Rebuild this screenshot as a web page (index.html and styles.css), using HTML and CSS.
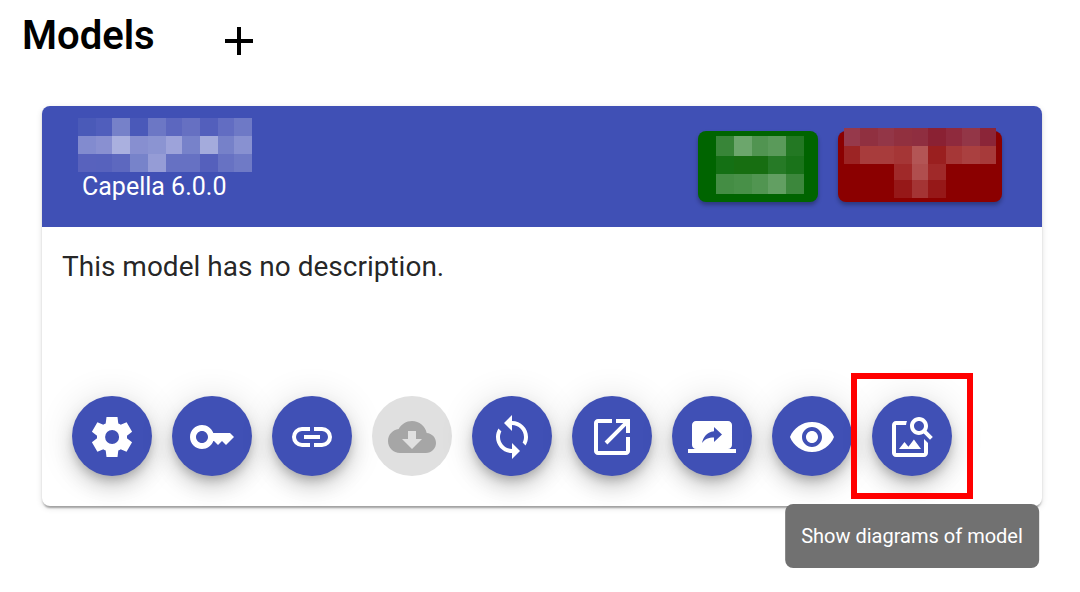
FILE: index.html
```html
<!DOCTYPE html>
<html lang="en">
<head>
<meta charset="utf-8">
<meta name="viewport" content="width=device-width, initial-scale=1">
<title>Models</title>
<link rel="stylesheet" href="styles.css">
</head>
<body>
<main class="page">
  <header class="page-header">
    <h1 class="page-title">Models</h1>
    <button class="add-button" type="button" aria-label="Add model"><svg class="icon" viewBox="0 0 24 24"><path d="M19 13h-6v6h-2v-6H5v-2h6V5h2v6h6v2z"/></svg></button>
  </header>

  <article class="card">
    <div class="card-header">
      <div class="card-heading">
        <svg class="mosaic" width="174" height="54" viewBox="0 0 174 54" aria-hidden="true">
          <path fill="#4a5ab8" d="M0 0h18v18H0z"/><path fill="#505ebc" d="M18 0h16v18H18z"/><path fill="#7681c9" d="M34 0h18v18H34z"/><path fill="#4a59b9" d="M52 0h18v18H52z"/><path fill="#6c77c5" d="M70 0h18v18H70z"/><path fill="#5c67bf" d="M88 0h16v18H88z"/><path fill="#6670c2" d="M104 0h18v18h-18z"/><path fill="#535fbc" d="M122 0h18v18h-18z"/><path fill="#626dc2" d="M140 0h16v18h-16z"/><path fill="#6e79c6" d="M156 0h18v18h-18z"/>
          <path fill="#828bcf" d="M0 18h18v18H0z"/><path fill="#8990d1" d="M18 18h16v18H18z"/><path fill="#aab0df" d="M34 18h18v18H34z"/><path fill="#878fd0" d="M52 18h18v18H52z"/><path fill="#8b94d2" d="M70 18h18v18H70z"/><path fill="#9da3da" d="M88 18h16v18H88z"/><path fill="#7782ca" d="M104 18h18v18h-18z"/><path fill="#a4abdc" d="M122 18h18v18h-18z"/><path fill="#7681c9" d="M140 18h16v18h-16z"/><path fill="#8891d1" d="M156 18h18v18h-18z"/>
          <path fill="#5862bd" d="M0 36h18v18H0z"/><path fill="#5762bd" d="M18 36h16v18H18z"/><path fill="#5d68bf" d="M34 36h18v18H34z"/><path fill="#7783ca" d="M52 36h18v18H52z"/><path fill="#959cd6" d="M70 36h18v18H70z"/><path fill="#6671c3" d="M88 36h34v18H88z"/><path fill="#5560bc" d="M122 36h18v18h-18z"/><path fill="#6772c3" d="M140 36h16v18h-16z"/><path fill="#6f7ac6" d="M156 36h18v18h-18z"/>
        </svg>
        <p class="card-subtitle">Capella 6.0.0</p>
      </div>
      <div class="badges">
        <div class="badge badge-green">
          <svg class="mosaic" width="88" height="58" viewBox="0 0 88 58" aria-hidden="true">
            <path fill="#388538" d="M0 0h18v20H0z"/><path fill="#6ca66c" d="M18 0h18v20H18z"/><path fill="#519451" d="M36 0h16v20H36z"/><path fill="#5a9a5a" d="M52 0h18v20H52z"/><path fill="#237823" d="M70 0h18v20H70z"/>
            <path fill="#147014" d="M0 20h18v18H0z"/><path fill="#176e11" d="M18 20h34v18H18z"/><path fill="#267a26" d="M52 20h18v18H52z"/><path fill="#1a731a" d="M70 20h18v18H70z"/>
            <path fill="#448d44" d="M0 38h18v20H0z"/><path fill="#489048" d="M18 38h18v20H18z"/><path fill="#519551" d="M36 38h16v20H36z"/><path fill="#629f62" d="M52 38h18v20H52z"/><path fill="#3c873c" d="M70 38h18v20H70z"/>
          </svg>
        </div>
        <div class="badge badge-red">
          <svg class="mosaic mosaic-raised" width="152" height="70" viewBox="0 0 152 70" aria-hidden="true">
            <path fill="#96394b" d="M0 0h16v18H0z"/><path fill="#903040" d="M16 0h18v18H16z"/><path fill="#933647" d="M34 0h16v18H34z"/><path fill="#91303f" d="M50 0h18v18H50z"/><path fill="#8f2e40" d="M68 0h16v18H68z"/><path fill="#8a2133" d="M84 0h18v18H84z"/><path fill="#8f2a3d" d="M102 0h16v18h-16z"/><path fill="#933647" d="M118 0h18v18h-18z"/><path fill="#8b2538" d="M136 0h16v18h-16z"/>
            <path fill="#9c2424" d="M0 18h16v18H0z"/><path fill="#a83c3c" d="M16 18h34v18H16z"/><path fill="#a53636" d="M50 18h18v18H50z"/><path fill="#b35555" d="M68 18h16v18H68z"/><path fill="#9a1f1f" d="M84 18h18v18H84z"/><path fill="#a63737" d="M102 18h16v18h-16z"/><path fill="#aa4040" d="M118 18h18v18h-18z"/><path fill="#a73a3a" d="M136 18h16v18h-16z"/>
            <path fill="#a02929" d="M50 36h18v16H50z"/><path fill="#b04e4e" d="M68 36h16v16H68z"/><path fill="#a02929" d="M84 36h18v16H84z"/>
            <path fill="#961818" d="M50 52h18v18H50z"/><path fill="#a43434" d="M68 52h16v18H68z"/><path fill="#961818" d="M84 52h18v18H84z"/>
          </svg>
        </div>
      </div>
    </div>

    <div class="card-body">
      <p class="description">This model has no description.</p>
      <div class="actions">
        <button class="fab" type="button" aria-label="Settings"><svg class="icon" viewBox="0 0 24 24"><path d="m9.25 22-.4-3.2q-.325-.125-.612-.3-.288-.175-.563-.375L4.7 19.375l-2.75-4.75 2.575-1.95Q4.5 12.5 4.5 12.337v-.675q0-.162.025-.337L1.95 9.375l2.75-4.75 2.975 1.25q.275-.2.575-.375.3-.175.6-.3l.4-3.2h5.5l.4 3.2q.325.125.613.3.287.175.562.375l2.975-1.25 2.75 4.75-2.575 1.95q.025.175.025.337v.675q0 .163-.05.338l2.575 1.95-2.75 4.75-2.95-1.25q-.275.2-.575.375-.3.175-.6.3l-.4 3.2Zm2.8-6.5q1.45 0 2.475-1.025Q15.55 13.45 15.55 12q0-1.45-1.025-2.475Q13.5 8.5 12.05 8.5q-1.475 0-2.488 1.025Q8.55 10.55 8.55 12q0 1.45 1.012 2.475Q10.575 15.5 12.05 15.5Z"/></svg></button>
        <button class="fab" type="button" aria-label="Access"><svg class="icon" viewBox="0 0 24 24"><path d="M21 10h-8.350C11.830 7.670 9.610 6 7 6c-3.310 0-6 2.690-6 6s2.690 6 6 6c2.610 0 4.830-1.670 5.650-4H13l2 2 2-2 2 2 4-4.040L21 10zM7 15c-1.650 0-3-1.350-3-3s1.350-3 3-3 3 1.350 3 3-1.350 3-3 3z"/></svg></button>
        <button class="fab" type="button" aria-label="Link"><svg class="icon" viewBox="0 0 24 24"><path d="M11 17H7q-2.075 0-3.537-1.463Q2 14.075 2 12t1.463-3.538Q4.925 7 7 7h4v2H7q-1.250 0-2.125.875T4 12q0 1.250.875 2.125T7 15h4Zm-3-4v-2h8v2Zm5 4v-2h4q1.250 0 2.125-.875T20 12q0-1.250-.875-2.125T17 9h-4V7h4q2.075 0 3.538 1.462Q22 9.925 22 12q0 2.075-1.462 3.537Q19.075 17 17 17Z"/></svg></button>
        <button class="fab" type="button" aria-label="Download" disabled><svg class="icon" viewBox="0 0 24 24"><path d="M19.350 10.040C18.670 6.590 15.640 4 12 4 9.110 4 6.600 5.640 5.350 8.040 2.340 8.360 0 10.910 0 14c0 3.310 2.690 6 6 6h13c2.760 0 5-2.240 5-5 0-2.640-2.050-4.780-4.650-4.960zM17 13l-5 5-5-5h3V9h4v4h3z"/></svg></button>
        <button class="fab" type="button" aria-label="Synchronize"><svg class="icon" viewBox="0 0 24 24"><path d="M12 4V1L8 5l4 4V6c3.310 0 6 2.690 6 6 0 1.010-.250 1.970-.700 2.800l1.460 1.460C19.540 15.030 20 13.570 20 12c0-4.420-3.580-8-8-8zm0 14c-3.310 0-6-2.690-6-6 0-1.010.250-1.970.700-2.800L5.240 7.740C4.460 8.970 4 10.430 4 12c0 4.420 3.580 8 8 8v3l4-4-4-4v3z"/></svg></button>
        <button class="fab" type="button" aria-label="Open"><svg class="icon" viewBox="0 0 24 24"><path d="M5 21q-.825 0-1.413-.587Q3 19.825 3 19V5q0-.825.587-1.413Q4.175 3 5 3h7v2H5v14h14v-7h2v7q0 .825-.587 1.413Q19.825 21 19 21Zm4.700-5.300-1.400-1.400L17.600 5H14V3h7v7h-2V6.400Z"/></svg></button>
        <button class="fab" type="button" aria-label="Request session"><svg class="icon" viewBox="0 0 24 24"><path d="M20 18c1.100 0 1.990-.900 1.990-2L22 6c0-1.110-.900-2-2-2H4c-1.110 0-2 .890-2 2v10c0 1.100.890 2 2 2H0v2h24v-2h-4zm-7-3.530v-2.190c-2.780 0-4.610.850-6 2.720.560-2.670 2.110-5.330 6-5.870V7l4 3.730-4 3.740z"/></svg></button>
        <button class="fab" type="button" aria-label="View"><svg class="icon" viewBox="0 0 24 24"><path d="M12 4.500C7 4.500 2.730 7.610 1 12c1.730 4.390 6 7.500 11 7.500s9.270-3.110 11-7.500c-1.730-4.390-6-7.500-11-7.500zM12 17c-2.760 0-5-2.240-5-5s2.240-5 5-5 5 2.240 5 5-2.240 5-5 5zm0-8c-1.660 0-3 1.340-3 3s1.340 3 3 3 3-1.340 3-3-1.340-3-3-3z"/></svg></button>
        <div class="highlighted">
          <button class="fab" type="button" aria-describedby="diagram-tip" aria-label="Diagrams"><svg class="icon" viewBox="0 0 24 24"><path d="M18 13v7H4V6h5.020c.050-.710.220-1.380.480-2H4c-1.100 0-2 .900-2 2v14c0 1.100.900 2 2 2h14c1.100 0 2-.900 2-2v-5l-2-2zm-1.500 5h-11l2.750-3.530 1.960 2.360 2.750-3.540L16.500 18zm2.800-9.110c.440-.700.700-1.510.700-2.390C20 4.010 17.990 2 15.500 2S11 4.010 11 6.500s2.010 4.500 4.490 4.500c.880 0 1.700-.260 2.390-.700L21 13.420 22.420 12 19.300 8.890zM15.500 9C14.120 9 13 7.880 13 6.500S14.120 4 15.500 4 18 5.120 18 6.500 16.880 9 15.500 9z"/></svg></button>
          <div class="tooltip" id="diagram-tip" role="tooltip">Show diagrams of model</div>
        </div>
      </div>
    </div>
  </article>
</main>
</body>
</html>
```
FILE: styles.css
```css
* {
  box-sizing: border-box;
}

body {
  margin: 0;
  background: #fff;
  color: #000;
  font-family: Roboto, "Liberation Sans", sans-serif;
}

button {
  border: 0;
  padding: 0;
  color: inherit;
  cursor: pointer;
}

.page {
  min-height: 100vh;
  padding: 10px 38px 86px 42px;
}

.page-header {
  display: flex;
  align-items: flex-start;
  gap: 60px;
  margin: 0 0 40px -20px;
}

.page-title {
  margin: 0;
  font-size: 40px;
  font-weight: 600;
  line-height: 52px;
}

.add-button {
  display: flex;
  padding: 7px 0 1px;
  background: none;
}

.icon {
  display: block;
  width: 48px;
  height: 48px;
  fill: currentColor;
}

.card {
  border-radius: 8px;
  background: #fff;
  box-shadow: 0 4px 2px -2px rgba(0, 0, 0, 0.2), 0 2px 2px rgba(0, 0, 0, 0.14), 0 2px 6px rgba(0, 0, 0, 0.12);
}

.card-header {
  display: flex;
  justify-content: space-between;
  align-items: flex-start;
  padding: 12px 40px 25px 36px;
  border-radius: 8px 8px 0 0;
  background: #4050b5;
  color: #fff;
}

.mosaic {
  display: block;
  shape-rendering: crispEdges;
}

.card-subtitle {
  margin: 0;
  padding-left: 4px;
  font-size: 25px;
  line-height: 30px;
}

.badges {
  display: flex;
  gap: 20px;
  padding-top: 13px;
}

.badge {
  height: 71px;
  border-radius: 8px;
  box-shadow: 0 3px 4px rgba(0, 0, 0, 0.3);
}

.badge-green {
  padding: 5px 14px 0 18px;
  background: #006400;
}

.badge-red {
  padding: 0 6px;
  background: #8b0000;
}

.mosaic-raised {
  margin-top: -3px;
}

.card-body {
  padding: 20px 20px 30px;
}

.description {
  min-height: 149px;
  margin: 0;
  color: rgba(0, 0, 0, 0.87);
  font-size: 28px;
  line-height: 40px;
}

.actions {
  display: flex;
  gap: 20px;
  padding-left: 10px;
}

.fab {
  display: flex;
  justify-content: center;
  flex: none;
  width: 80px;
  height: 80px;
  padding-top: 1px;
  align-items: center;
  border-radius: 50%;
  background: #4050b5;
  color: #fff;
  box-shadow: 0 6px 10px -2px rgba(0, 0, 0, 0.2), 0 12px 20px rgba(0, 0, 0, 0.14), 0 2px 36px rgba(0, 0, 0, 0.12);
}

.fab:disabled {
  background: #e0e0e0;
  color: #a6a6a6;
  box-shadow: none;
  cursor: default;
}

.highlighted {
  position: relative;
}

.highlighted::before {
  content: "";
  position: absolute;
  inset: -23px -21px;
  border: 6px solid #f00;
  pointer-events: none;
}

.tooltip {
  position: absolute;
  top: 108px;
  left: 50%;
  padding: 16px;
  transform: translateX(-50%);
  border-radius: 8px;
  background: #717171;
  color: #fff;
  font-size: 20px;
  line-height: 32px;
  white-space: nowrap;
}
```
